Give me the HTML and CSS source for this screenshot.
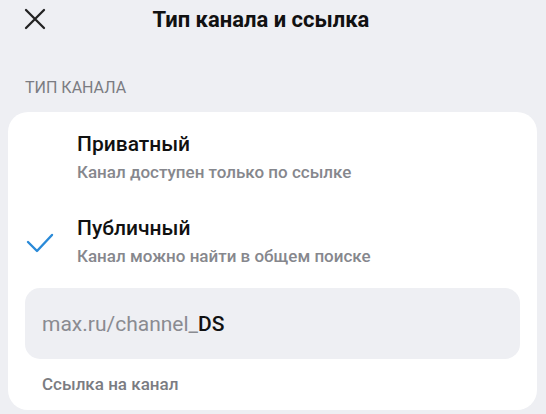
FILE: index.html
```html
<!DOCTYPE html>
<html lang="ru">
<head>
    <meta charset="UTF-8">
    <meta name="viewport" content="width=device-width, initial-scale=1.0">
    <title>Тип канала и ссылка</title>
    <link rel="stylesheet" href="styles.css">
</head>
<body>
    <header class="topbar">
        <button class="close-btn" aria-label="Закрыть">
            <svg width="22" height="22" viewBox="0 0 22 22">
                <path d="M2 2 L20 20 M20 2 L2 20" stroke="#222" stroke-width="2.3" stroke-linecap="round" fill="none"/>
            </svg>
        </button>
        <h1>Тип канала и ссылка</h1>
    </header>

    <div class="section-title">ТИП КАНАЛА</div>

    <div class="card">
        <div class="option">
            <div class="option-mark"></div>
            <div class="option-text">
                <div class="option-name">Приватный</div>
                <div class="option-desc">Канал доступен только по ссылке</div>
            </div>
        </div>

        <div class="option selected">
            <div class="option-mark">
                <svg width="28" height="22" viewBox="0 0 28 22">
                    <path d="M2 9 L11 18 L26 2" stroke="#2a8ad8" stroke-width="2.4" stroke-linecap="round" stroke-linejoin="round" fill="none"/>
                </svg>
            </div>
            <div class="option-text">
                <div class="option-name">Публичный</div>
                <div class="option-desc">Канал можно найти в общем поиске</div>
            </div>
        </div>

        <div class="link-field">
            <span class="link-prefix">max.ru/channel_</span><span class="link-value">DS</span>
        </div>
        <div class="link-hint">Ссылка на канал</div>
    </div>
</body>
</html>
```

FILE: styles.css
```css
body {
    margin: 0;
    background-color: #eeeff3;
    font-family: Roboto, "Noto Sans", Arial, sans-serif;
    color: #111;
    width: 546px;
    height: 414px;
    overflow: hidden;
}

.topbar {
    display: flex;
    align-items: center;
    height: 38px;
    padding: 0 24px;
}

.close-btn {
    background: none;
    border: none;
    padding: 0;
    width: 22px;
    height: 22px;
    display: flex;
}

.topbar h1 {
    flex: 1;
    margin: 0 46px 0 0;
    text-align: center;
    font-size: 22px;
    font-weight: 700;
    color: #111;
}

.section-title {
    margin: 40px 0 0 25px;
    font-size: 16px;
    line-height: 20px;
    color: #7b7c82;
}

.card {
    margin: 14px 9px 0 8px;
    background: white;
    border-radius: 20px;
    padding: 19px 17px 0 17px;
    height: 298px;
    box-sizing: border-box;
}

.option {
    display: flex;
    align-items: center;
}

.option + .option {
    margin-top: 32px;
}

.option-mark {
    width: 51px;
    flex-shrink: 0;
    display: flex;
    padding-left: 1px;
    padding-top: 6px;
}

.option-name {
    font-size: 21px;
    font-weight: 500;
    color: #111;
    line-height: 26px;
}

.option-desc {
    font-size: 17px;
    font-weight: 500;
    color: #86878d;
    line-height: 22px;
    margin-top: 4px;
}

.link-field {
    background: #eeeff3;
    border-radius: 15px;
    height: 71px;
    margin-top: 21px;
    display: flex;
    align-items: center;
    padding: 0 17px;
    font-size: 21px;
}

.link-prefix {
    color: #8a8b91;
}

.link-value {
    color: #111;
    font-weight: 500;
}

.link-hint {
    margin: 14px 0 0 17px;
    font-size: 17px;
    font-weight: 500;
    line-height: 22px;
    color: #7b7c82;
}
```
